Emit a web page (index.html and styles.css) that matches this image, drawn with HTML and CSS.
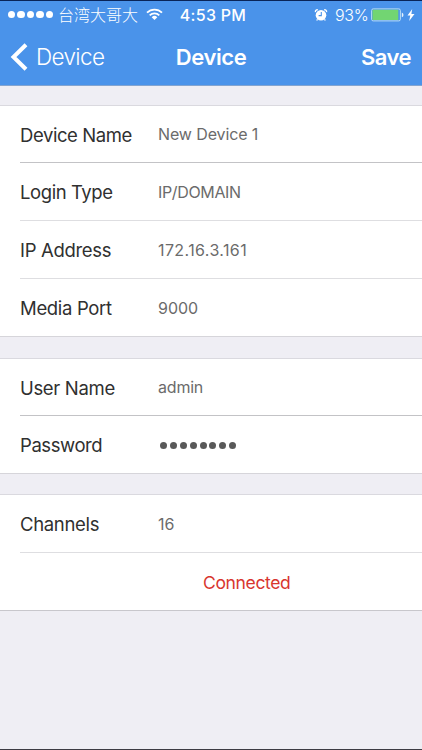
FILE: index.html
```html
<!DOCTYPE html>
<html lang="en">
<head>
<meta charset="utf-8">
<title>Device</title>
<link rel="stylesheet" href="styles.css">
</head>
<body>
<div class="screen">
  <header class="header">
    <div class="status">
      <div class="status-left">
        <span class="signal"><i></i><i></i><i></i><i></i><i></i></span>
        <span class="carrier">台湾大哥大</span>
        <svg class="wifi" width="17" height="13" viewBox="0 0 17 13" fill="none" stroke="#fff" stroke-width="1.8"><path d="M1 4.700a10.600 10.600 0 0 1 15 0M3.700 7.400a6.800 6.800 0 0 1 9.600 0"/><path d="M5.700 9.200a4 4 0 0 1 5.600 0L8.500 12z" fill="#fff" stroke="none"/></svg>
      </div>
      <div class="time">4:53 PM</div>
      <div class="status-right">
        <svg class="alarm" width="14" height="14" viewBox="0 0 14 14"><circle cx="7" cy="7.300" r="5.300" fill="#fff"/><path d="M1.400 4.100a2 2 0 0 1 2.400-2.300M12.600 4.100a2 2 0 0 0-2.400-2.300M3.500 11.300l-.8 1.200M10.500 11.300l.8 1.200" stroke="#fff" stroke-width="1.300" fill="none"/><path d="M7.300 4v3.600H4.600" stroke="#4a93ea" stroke-width="1.100" fill="none"/></svg>
        <span class="percent">93%</span>
        <svg class="battery" width="33" height="14" viewBox="0 0 33 14"><rect x=".6" y=".9" width="28.800" height="12" rx="1.600" fill="#4a93ea" stroke="#b8dcf5" stroke-width="1"/><rect x="1.500" y="1.800" width="25.800" height="10.200" rx=".6" fill="#72d572"/><path d="M30.800 4.600q1.700.6 1.700 2.300t-1.700 2.300z" fill="#e5f1fc"/></svg>
        <svg class="bolt" width="8" height="12" viewBox="0 0 8 12"><path d="M5.200 0L.5 6.600h2.800L2.200 12 7.500 5H4.400z" fill="#fff"/></svg>
      </div>
    </div>
    <nav class="nav">
      <a class="back"><svg width="18" height="28" viewBox="0 0 18 28" fill="none" stroke="#fff" stroke-width="4"><path d="M16 1.700L3.500 14 16 26.300"/></svg><span class="back-text">Device</span></a>
      <h1 class="title">Device</h1>
      <a class="save">Save</a>
    </nav>
  </header>
  <main class="form">
    <section class="group">
      <div class="row strong"><span class="label l-device">Device Name</span><span class="value v-name">New Device 1</span></div>
      <div class="row"><span class="label l-login">Login Type</span><span class="value v-type">IP/DOMAIN</span></div>
      <div class="row"><span class="label">IP Address</span><span class="value v-ip">172.16.3.161</span></div>
      <div class="row"><span class="label">Media Port</span><span class="value">9000</span></div>
    </section>
    <section class="group">
      <div class="row strong"><span class="label">User Name</span><span class="value v-user">admin</span></div>
      <div class="row"><span class="label l-pass">Password</span><span class="value dots"><i></i><i></i><i></i><i></i><i></i><i></i><i></i><i></i></span></div>
    </section>
    <section class="group last">
      <div class="row"><span class="label">Channels</span><span class="value v-chan">16</span></div>
      <div class="row state"><span class="connected">Connected</span></div>
    </section>
  </main>
</div>
</body>
</html>
```
FILE: styles.css
```css
* { box-sizing: border-box; }
body { margin: 0; font-family: Inter, "Noto Sans CJK TC", sans-serif; }
.screen { width: 422px; height: 750px; background: #efeef4; border-bottom: 1px solid #3c3b43; overflow: hidden; }
.header { height: 86px; background: #4a93ea; border-top: 1px solid #092458; border-bottom: 1px solid #83a4d0; color: #fff; }
.status { height: 27px; display: grid; grid-template-columns: 172px 82px 1fr; align-items: center; white-space: nowrap; }
.status-left { display: flex; align-items: center; padding-left: 8px; }
.signal { display: flex; gap: 2px; width: 50px; }
.signal i { width: 7.4px; height: 7.4px; border-radius: 50%; background: #fff; }
.carrier { font: 300 16px/27px "Noto Sans CJK TC", sans-serif; width: 88px; }
.time { text-align: center; font-size: 16px; font-weight: 500; letter-spacing: 0.3px; }
.status-right { display: flex; align-items: center; padding-left: 60px; }
.percent { font-size: 16px; font-weight: 300; letter-spacing: -0.3px; width: 36px; margin-left: 7px; }
.bolt { margin-left: 3px; }
.nav { height: 57px; display: grid; grid-template-columns: 140px 142px 1fr; align-items: center; }
.back { display: flex; align-items: center; padding-left: 10px; font-size: 22.500px; font-weight: 300; letter-spacing: -0.65px; }
.back-text { margin-left: 8px; }
.title { margin: 0; text-align: center; font-size: 22px; font-weight: 600; letter-spacing: -0.4px; }
.save { text-align: right; padding-right: 11px; font-size: 22px; font-weight: 600; letter-spacing: -0.5px; }
.form { padding-top: 19px; }
.group { background: #fff; border-top: 1px solid #dad9df; border-bottom: 1px solid #d6d5da; margin-bottom: 21px; }
.group:nth-child(2) { margin-bottom: 20px; }
.row { height: 58px; margin-left: 20px; display: flex; align-items: center; border-bottom: 1px solid #dedee1; }
.row:first-child { height: 57px; }
.row.strong { border-bottom-color: #c3c3c6; }
.row:last-child { height: 57px; border-bottom: 0; }
.last { border-bottom-color: #c8c7cc; }
.last .row:first-child { height: 58px; }
.label { width: 138px; padding-top: 1px; font-size: 18.500px; letter-spacing: -0.33px; color: #303030; white-space: nowrap; }
.l-device, .l-login, .l-pass { letter-spacing: -0.42px; }
.value { font-size: 16px; color: #6b6b6b; white-space: nowrap; }
.v-name { letter-spacing: -0.12px; }
.v-type { letter-spacing: -0.35px; }
.v-ip { letter-spacing: 0.4px; }
.v-user { letter-spacing: -0.2px; }
.dots { display: flex; gap: 2.900px; padding: 1px 0 0 2px; }
.dots i { width: 7px; height: 7px; border-radius: 50%; background: #595959; }
.state { justify-content: flex-start; padding: 2px 0 0 183px; }
.connected { font-size: 17.500px; letter-spacing: -0.35px; color: #d8362f; }
```
